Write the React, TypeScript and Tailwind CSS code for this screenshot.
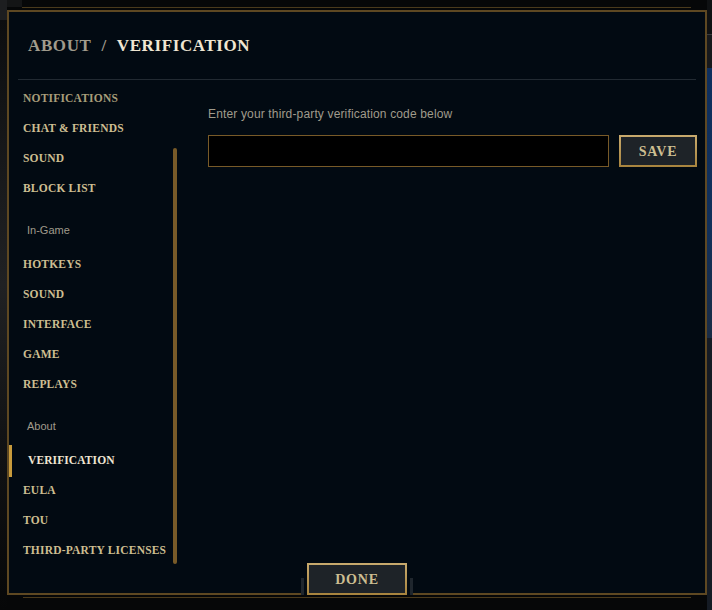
import React from "react";

const serif = { fontFamily: '"Liberation Serif", "Times New Roman", serif' };

type Item = { label: string; kind?: "header" | "active" | "dim" };

const items: Item[] = [
  { label: "NOTIFICATIONS", kind: "dim" },
  { label: "CHAT & FRIENDS" },
  { label: "SOUND" },
  { label: "BLOCK LIST" },
  { label: "In-Game", kind: "header" },
  { label: "HOTKEYS" },
  { label: "SOUND" },
  { label: "INTERFACE" },
  { label: "GAME" },
  { label: "REPLAYS" },
  { label: "About", kind: "header" },
  { label: "VERIFICATION", kind: "active" },
  { label: "EULA" },
  { label: "TOU" },
  { label: "THIRD-PARTY LICENSES" },
];

function NavRow({ item }: { item: Item }) {
  if (item.kind === "header") {
    return (
      <div className="h-[46px] pt-[19px] pl-[18px] text-[11px] leading-[14px] text-[#a09b8c] font-['Liberation_Sans',Arial,sans-serif]">
        {item.label}
      </div>
    );
  }
  if (item.kind === "active") {
    return (
      <div className="h-[30px] flex items-center">
        <div className="w-[3px] h-[32px] bg-[#c89b3c]" />
        <div
          className="pl-[16px] text-[11.5px] font-bold tracking-[0.1px] text-[#f0e6d2]"
          style={serif}
        >
          {item.label}
        </div>
      </div>
    );
  }
  return (
    <div
      className={
        "h-[30px] flex items-center pl-[14px] text-[11.5px] font-bold tracking-[0.2px] " +
        (item.kind === "dim" ? "text-[#a89d7a]" : "text-[#cdbe91]")
      }
      style={serif}
    >
      {item.label}
    </div>
  );
}

export default function App() {
  return (
    <div className="w-[712px] h-[610px] flex bg-[#060708] overflow-hidden">
      {/* left background strip */}
      <div className="w-[7px] flex flex-col">
        <div className="h-[20px] bg-[#1d1e20]" />
        <div className="flex-1 bg-[linear-gradient(to_bottom,#0c0d0f_0%,#1a1b1d_30%,#202123_45%,#121315_70%,#060708_100%)]" />
      </div>

      {/* center */}
      <div className="w-[700px] flex flex-col">
        <div className="h-[7px] flex">
          <div className="w-[15px] bg-[#141516]" />
        </div>
        <div className="h-[3px] pl-[15px] pr-[16px]">
          <div className="h-[1px] bg-[#4a3a1c]" />
        </div>
        {/* modal */}
        <div className="relative h-[585px] border-2 border-[#5e4822] bg-[#020a12] flex flex-col">
          {/* header */}
          <div className="h-[67px] flex items-center pl-[19px] pt-[1px]">
            <div
              className="flex items-center text-[17px] font-bold tracking-[0.6px]"
              style={serif}
            >
              <span className="text-[#a09b8c]">ABOUT</span>
              <span className="text-[#a09b8c] mx-[10px]">/</span>
              <span className="text-[#f0e6d2]">VERIFICATION</span>
            </div>
          </div>
          <div className="mx-[9px] h-px bg-[#222a32]" />

          {/* body */}
          <div className="flex-1 flex">
            <div className="w-[171px] flex">
              <div className="w-[164px] pt-[4px]">
                {items.map((it, i) => (
                  <NavRow key={i} item={it} />
                ))}
              </div>
              <div className="w-[4px]">
                <div className="mt-[68px] h-[416px] rounded-full bg-[#785a28]" />
              </div>
            </div>
            <div className="flex-1 pl-[28px] pr-[8px] pt-[27px]">
              <div className="text-[12px] leading-[14px] tracking-[0.15px] text-[#a09b8c] font-['Liberation_Sans',Arial,sans-serif]">
                Enter your third-party verification code below
              </div>
              <div className="mt-[14px] flex gap-[10px]">
                <div className="w-[401px] h-[32px] bg-black border border-[#785a28]" />
                <div className="w-[78px] h-[32px] p-[2px] bg-[linear-gradient(to_bottom,#c8aa6e,#a8843e)]">
                  <div
                    className="w-full h-full bg-[#1e2328] flex items-center justify-center text-[14px] font-bold tracking-[0.8px] text-[#cdbe91]"
                    style={serif}
                  >
                    SAVE
                  </div>
                </div>
              </div>
            </div>
          </div>

          {/* footer button */}
          <div className="absolute bottom-[-2px] left-1/2 -translate-x-1/2 h-[32px] flex items-end gap-[3px] bg-[#020a12]">
            <div className="w-[3px] h-[17px] bg-[#1f262d]" />
            <div className="w-[100px] h-[32px] p-[2px] bg-[linear-gradient(to_bottom,#c8aa6e,#a8843e)]">
              <div
                className="w-full h-full bg-[#1e2328] flex items-center justify-center text-[14px] font-bold tracking-[0.8px] text-[#cdbe91]"
                style={serif}
              >
                DONE
              </div>
            </div>
            <div className="w-[3px] h-[17px] bg-[#1f262d]" />
          </div>
        </div>
        <div className="h-[2px]" />
        <div className="h-[2px] pl-[16px] pr-[16px]">
          <div className="h-[1px] bg-[#4a3a1c]" />
        </div>
      </div>

      {/* right background strip */}
      <div className="flex-1 flex flex-col">
        <div className="h-[34px] bg-[#0f1113]" />
        <div className="h-px bg-[#3a3b3d]" />
        <div className="h-[33px] bg-[#17191c]" />
        <div className="h-[270px] bg-[linear-gradient(to_bottom,#0e2f5e,#11305a_60%,#1a2c45)]" />
        <div className="flex-1 bg-[#151b24]" />
      </div>
    </div>
  );
}
